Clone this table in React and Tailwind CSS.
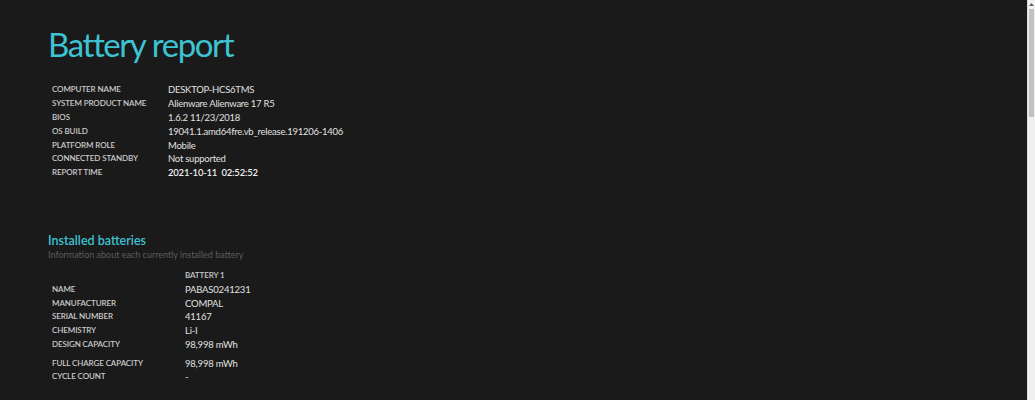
const systemInfo = [
  ['COMPUTER NAME', 'DESKTOP-HCS6TMS'],
  ['SYSTEM PRODUCT NAME', 'Alienware Alienware 17 R5'],
  ['BIOS', '1.6.2 11/23/2018'],
  ['OS BUILD', '19041.1.amd64fre.vb_release.191206-1406'],
  ['PLATFORM ROLE', 'Mobile'],
  ['CONNECTED STANDBY', 'Not supported'],
];

const batteryInfo = [
  ['NAME', 'PABAS0241231'],
  ['MANUFACTURER', 'COMPAL'],
  ['SERIAL NUMBER', '41167'],
  ['CHEMISTRY', 'Li-I'],
  ['DESIGN CAPACITY', '98,998 mWh'],
];

export default function App() {
  return (
    <div className="flex h-[400px] w-full overflow-hidden bg-[#1a1a1a] font-['Lato',sans-serif]">
      <div className="flex-1 pl-[48px] pt-[22px]">
        {/* Header */}
        <h1 className="text-[33px] leading-[44px] font-normal tracking-[-1.4px] text-[#3ec3d3]">
          Battery report
        </h1>

        {/* System info */}
        <table className="mt-[17px] ml-[4px] border-collapse text-[8px] leading-[11px] tracking-[-0.1px]">
          <tbody>
            {systemInfo.map(([label, value]) => (
              <tr key={label} className="h-[13.8px]">
                <td className="w-[116px] p-0 align-middle font-semibold text-[#cacaca]">{label}</td>
                <td className="p-0 align-middle text-[9.5px] tracking-[-0.25px] text-[#e0e0e0]">{value}</td>
              </tr>
            ))}
            <tr className="h-[13.8px]">
              <td className="p-0 align-middle font-semibold text-[#cacaca]">REPORT TIME</td>
              <td className="p-0 align-middle text-[9.5px] tracking-[-0.2px] font-semibold text-[#f0f0f0]">
                2021-10-11&nbsp;&nbsp;02:52:52
              </td>
            </tr>
          </tbody>
        </table>

        {/* Installed batteries */}
        <h2 className="mt-[53px] text-[12.5px] leading-[16px] font-semibold text-[#3ec3d3]">
          Installed batteries
        </h2>
        <p className="text-[9px] leading-[12px] text-[#5c5c5c]">
          Information about each currently installed battery
        </p>

        <table className="mt-[8px] ml-[4px] border-collapse text-[8px] leading-[11px] tracking-[-0.1px]">
          <tbody>
            <tr className="h-[13.8px]">
              <td className="w-[133px] p-0"></td>
              <td className="p-0 align-middle font-semibold text-[#cacaca]">BATTERY 1</td>
            </tr>
            {batteryInfo.map(([label, value]) => (
              <tr key={label} className="h-[13.8px]">
                <td className="p-0 align-middle font-semibold text-[#cacaca]">{label}</td>
                <td className="p-0 align-middle text-[9.5px] tracking-[-0.2px] text-[#e0e0e0]">{value}</td>
              </tr>
            ))}
            <tr className="h-[18px]">
              <td className="p-0 align-bottom font-semibold text-[#cacaca]">FULL CHARGE CAPACITY</td>
              <td className="p-0 align-bottom text-[9.5px] tracking-[-0.2px] text-[#e0e0e0]">98,998 mWh</td>
            </tr>
            <tr className="h-[14px]">
              <td className="p-0 align-middle font-semibold text-[#cacaca]">CYCLE COUNT</td>
              <td className="p-0 align-middle text-[9.5px] text-[#e0e0e0]">-</td>
            </tr>
          </tbody>
        </table>
      </div>

      {/* Scrollbar */}
      <div className="flex w-[8px] flex-col border-l border-[#dcdcdc] bg-[#f0f0f0]">
        <div className="flex h-[9px] items-center justify-center">
          <svg width="5" height="3" viewBox="0 0 5 3">
            <path d="M0 3 L2.5 0 L5 3 Z" fill="#606060" />
          </svg>
        </div>
        <div className="mx-[1px] h-[108px] bg-[#c1c1c1]"></div>
      </div>
    </div>
  );
}
